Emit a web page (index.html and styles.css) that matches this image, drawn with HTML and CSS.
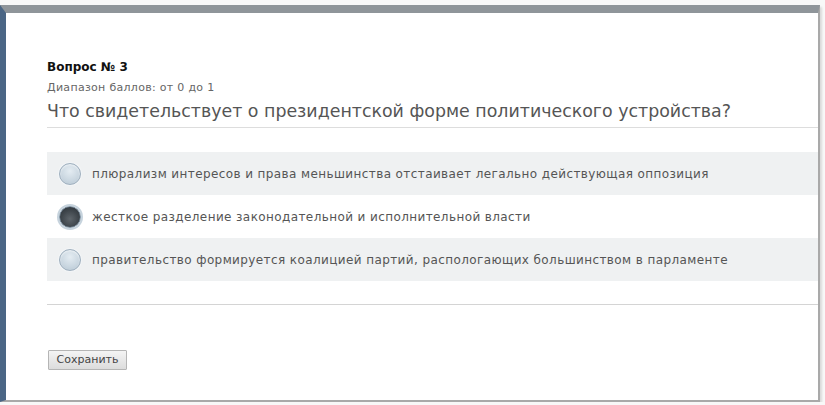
FILE: index.html
```html
<!DOCTYPE html>
<html lang="ru">
<head>
  <meta charset="UTF-8">
  <meta name="viewport" content="width=device-width, initial-scale=1.0">
  <title>Тест</title>
  <link rel="stylesheet" href="styles.css">
</head>
<body>
  <div class="frame">
    <form class="question" method="post">
      <div class="q-number">Вопрос № 3</div>
      <div class="q-range">Диапазон баллов: от 0 до 1</div>
      <h2 class="q-text">Что свидетельствует о президентской форме политического устройства?</h2>

      <div class="answers">
        <label class="answer odd">
          <input type="radio" name="q3" value="1">
          <span class="radio"></span>
          <span class="answer-text">плюрализм интересов и права меньшинства отстаивает легально действующая оппозиция</span>
        </label>
        <label class="answer">
          <input type="radio" name="q3" value="2" checked>
          <span class="radio"></span>
          <span class="answer-text">жесткое разделение законодательной и исполнительной власти</span>
        </label>
        <label class="answer odd">
          <input type="radio" name="q3" value="3">
          <span class="radio"></span>
          <span class="answer-text">правительство формируется коалицией партий, распологающих большинством в парламенте</span>
        </label>
      </div>

      <div class="actions">
        <button type="submit" class="save">Сохранить</button>
      </div>
    </form>
  </div>
</body>
</html>
```

FILE: styles.css
```css
body {
  font-family: "DejaVu Sans", Verdana, sans-serif;
  background-color: #f8f8f8;
  margin: 0;
  padding: 0;
}
.frame {
  margin-top: 5px;
  width: 812px;
  height: 387px;
  background-color: #fff;
  border-top: 8px solid #8f959a;
  border-left: 6px solid #4b6685;
  border-right: 2px solid #a9a9a9;
  border-bottom: 2px solid #a9a9a9;
  box-shadow: 2px 2px 2px rgba(0, 0, 0, 0.12);
}
.question {
  padding: 47px 0 0 41px;
}
.q-number {
  font-size: 12px;
  font-weight: bold;
  color: #111;
  line-height: 15px;
}
.q-range {
  margin-top: 6px;
  font-size: 11px;
  letter-spacing: 0.3px;
  color: #666;
  line-height: 14px;
}
.q-text {
  margin: 0;
  padding: 5px 0 5px;
  font-size: 17.4px;
  font-weight: normal;
  color: #555;
  line-height: 22px;
  border-bottom: 1px solid #ddd;
}
.answers {
  margin-top: 24px;
  padding-bottom: 23px;
  border-bottom: 1px solid #d4d4d4;
}
.answer {
  display: flex;
  align-items: center;
  height: 43px;
  padding-left: 12px;
  font-size: 12px;
  letter-spacing: 0.4px;
  color: #555;
  cursor: pointer;
}
.answer.odd {
  background-color: #eff1f2;
}
.answer input {
  display: none;
}
.radio {
  width: 20px;
  height: 20px;
  border-radius: 50%;
  border: 1px solid #9fb0bf;
  background: radial-gradient(circle at 50% 35%, #e4ecf2 0%, #c9d6e0 60%, #b3c3cf 100%);
  box-shadow: 0 0 0 1px #f2f5f7, inset 0 1px 2px rgba(255, 255, 255, 0.7);
  margin-right: 11px;
  flex-shrink: 0;
}
.answer input:checked + .radio {
  border-color: #7f93a4;
  background: radial-gradient(circle at 50% 60%, #5f666c 0%, #3e454b 55%, #2a3035 100%);
  box-shadow: 0 0 0 2px #c6d3dd;
}
.actions {
  padding-top: 43px;
}
.save {
  height: 20px;
  width: 79px;
  padding: 0;
  margin-left: 1px;
  font-family: "DejaVu Sans", Verdana, sans-serif;
  font-size: 11px;
  color: #444;
  background: linear-gradient(#f4f4f4, #dcdcdc);
  border: 1px solid #b5b5b5;
  border-radius: 1px;
  cursor: pointer;
}
```
